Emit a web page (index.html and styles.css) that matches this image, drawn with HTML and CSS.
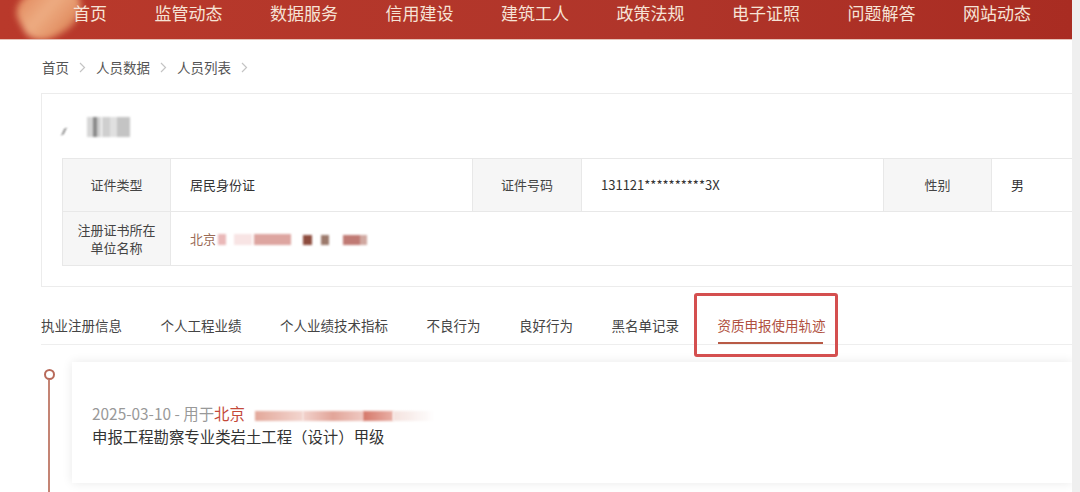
FILE: index.html
```html
<!DOCTYPE html>
<html lang="zh-CN">
<head>
  <meta charset="UTF-8" />
  <meta name="viewport" content="width=device-width, initial-scale=1.0">
  <title>人员详情</title>
  <link rel="stylesheet" href="styles.css">
</head>
<body>
  <div class="page">

    <header class="topnav">
      <div class="topnav-flag"></div>
      <nav class="topnav-links">
        <a>首页</a>
        <a>监管动态</a>
        <a>数据服务</a>
        <a>信用建设</a>
        <a>建筑工人</a>
        <a>政策法规</a>
        <a>电子证照</a>
        <a>问题解答</a>
        <a>网站动态</a>
      </nav>
    </header>

    <div class="breadcrumb">
      <span>首页</span>
      <svg class="crumb-sep" width="7" height="11" viewBox="0 0 7 11"><path d="M1 1l4.5 4.5L1 10" fill="none" stroke="#c4c4c4" stroke-width="1.2"/></svg>
      <span>人员数据</span>
      <svg class="crumb-sep" width="7" height="11" viewBox="0 0 7 11"><path d="M1 1l4.5 4.5L1 10" fill="none" stroke="#c4c4c4" stroke-width="1.2"/></svg>
      <span>人员列表</span>
      <svg class="crumb-sep" width="7" height="11" viewBox="0 0 7 11"><path d="M1 1l4.5 4.5L1 10" fill="none" stroke="#c4c4c4" stroke-width="1.2"/></svg>
    </div>

    <section class="info-card">
      <div class="person-name">
        <span class="blur blur-slash"></span>
        <span class="blur blur-n1"></span>
        <span class="blur blur-n2"></span>
      </div>

      <table class="info-table">
        <colgroup>
          <col class="c-label">
          <col class="c-value">
          <col class="c-label2">
          <col class="c-value">
          <col class="c-label">
          <col class="c-last">
        </colgroup>
        <tr class="row-first">
          <th>证件类型</th>
          <td>居民身份证</td>
          <th>证件号码</th>
          <td>131121**********3X</td>
          <th>性别</th>
          <td>男</td>
        </tr>
        <tr class="row-second">
          <th>注册证书所在<br>单位名称</th>
          <td colspan="5" class="company">
            北京<span class="blur b-a"></span><span class="blur b-b"></span><span class="blur b-c"></span><span class="blur b-d"></span><span class="blur b-e"></span><span class="blur b-f"></span>
          </td>
        </tr>
      </table>
    </section>

    <div class="tabs">
      <span class="tab">执业注册信息</span>
      <span class="tab">个人工程业绩</span>
      <span class="tab">个人业绩技术指标</span>
      <span class="tab">不良行为</span>
      <span class="tab">良好行为</span>
      <span class="tab">黑名单记录</span>
      <span class="tab active">资质申报使用轨迹</span>
    </div>

    <div class="timeline">
      <div class="rail">
        <span class="dot"></span>
        <span class="line"></span>
      </div>
      <div class="record">
        <div class="record-meta">2025-03-10 - 用于<span class="city">北京</span><span class="blur r-a"></span><span class="blur r-b"></span><span class="blur r-c"></span><span class="blur r-d"></span></div>
        <div class="record-title">申报工程勘察专业类岩土工程（设计）甲级</div>
      </div>
    </div>

  </div>
</body>
</html>
```

FILE: styles.css
```css
body {
  margin: 0;
  background: #efefef;
  font-family: "Noto Sans CJK SC", "Liberation Sans", sans-serif;
  color: #333;
}

.page {
  width: 1072px;
  height: 492px;
  overflow: hidden;
  background: #fff;
}

/* top navigation */
.topnav {
  position: relative;
  height: 40px;
  overflow: hidden;
  background: linear-gradient(90deg, #b9392b, #b0352a 60%, #a92c22);
  border-bottom: 1px solid #e6c2b8;
  box-sizing: border-box;
}

.topnav-flag {
  position: absolute;
  left: 18px;
  top: -14px;
  width: 64px;
  height: 50px;
  border-radius: 40% 60% 55% 45%;
  transform: rotate(-28deg);
  background: linear-gradient(160deg, #e48c5e 0%, #f0b287 45%, #e79a6c 75%, #cf6e48 100%);
  filter: blur(3px);
  opacity: 0.95;
}

.topnav-links {
  position: relative;
  display: flex;
  gap: 47.5px;
  padding-left: 73px;
  height: 39px;
  align-items: flex-start;
}

.topnav-links a {
  font-size: 17px;
  color: #f6e3d6;
  line-height: 24px;
  margin-top: 1px;
}

/* breadcrumb */
.breadcrumb {
  display: flex;
  align-items: center;
  gap: 8px;
  margin: 17px 0 0 42px;
  font-size: 13.5px;
  line-height: 20px;
  color: #555;
}

.crumb-sep {
  margin: 0 2px;
}

/* person info */
.info-card {
  margin: 16px 0 0 41px;
  height: 194px;
  box-sizing: border-box;
  border: 1px solid #ececec;
  border-right: none;
  padding: 0 0 0 20px;
}

.person-name {
  display: flex;
  align-items: center;
  height: 20px;
  margin-top: 23px;
}

.blur {
  display: inline-block;
  filter: blur(1.2px);
  vertical-align: middle;
}

.blur-slash {
  width: 2px;
  height: 7px;
  margin: 9px 22px 0 1px;
  background: #888;
  transform: skewX(-25deg);
}

.blur-n1 {
  width: 14px;
  height: 20px;
  background: linear-gradient(90deg, #d6d6d6 0 45%, #8a8a8a 45% 75%, #d0d0d0 75%);
}

.blur-n2 {
  width: 28px;
  height: 20px;
  margin-left: 1px;
  background: linear-gradient(90deg, #cfcfcf 0 30%, #e0e0e0 30% 55%, #c4c4c4 55%);
}

.info-table {
  margin-top: 21px;
  width: 1011px;
  border-collapse: collapse;
  table-layout: fixed;
  font-size: 13px;
}

.c-label { width: 108px; }
.c-label2 { width: 109px; }
.c-value { width: 302px; }
.c-last { width: 82px; }

.info-table th,
.info-table td {
  border: 1px solid #e8e8e8;
  padding: 0;
  font-weight: normal;
  line-height: 18px;
}

.row-first th,
.row-first td {
  height: 52px;
}

.row-second th,
.row-second td {
  height: 53px;
}

.info-table th {
  background: #f6f6f6;
  color: #444;
  text-align: center;
}

.info-table td {
  padding-left: 19px;
  color: #333;
}

.info-table td:last-child {
  border-right: none;
}

.info-table td.company {
  color: #9a6a55;
}

.b-a { width: 8px; height: 11px; margin-left: 2px; background: #eab8b8; }
.b-b { width: 18px; height: 11px; margin-left: 8px; background: #f8e4e4; }
.b-c { width: 37px; height: 11px; margin-left: 2px; background: #dda5a0; }
.b-d { width: 9px; height: 10px; margin-left: 12px; background: #8e4c3e; }
.b-e { width: 8px; height: 10px; margin-left: 9px; background: #9c7a6c; }
.b-f { width: 24px; height: 10px; margin-left: 14px; background: linear-gradient(90deg, #c07a74 70%, #d0a8a0 70%); }

/* tabs */
.tabs {
  display: flex;
  gap: 38.5px;
  margin: 13px 0 0 41px;
  border-bottom: 1px solid #eee;
}

.tab {
  position: relative;
  font-size: 13.5px;
  line-height: 20px;
  padding: 15px 0 9px;
  color: #444;
}

.tab.active {
  color: #b0503e;
}

.tab.active::before {
  content: "";
  position: absolute;
  left: 0;
  right: 3px;
  bottom: 0;
  height: 2px;
  background: #b85a46;
}

/* annotation box drawn over the active tab */
.tab.active::after {
  content: "";
  position: absolute;
  left: -24px;
  top: -7px;
  width: 138px;
  height: 58px;
  border: 3px solid #d44f4f;
  border-radius: 3px;
}

/* timeline */
.timeline {
  display: flex;
  margin: 17px 0 0 41px;
  height: 200px;
}

.rail {
  display: flex;
  flex-direction: column;
  align-items: center;
  width: 16px;
}

.dot {
  width: 11px;
  height: 11px;
  box-sizing: border-box;
  margin-top: 7px;
  border: 2px solid #b86a5a;
  border-radius: 50%;
}

.line {
  flex: 1;
  width: 2px;
  background: #c48474;
}

.record {
  margin-left: 15px;
  flex: 1;
  height: 121px;
  box-sizing: border-box;
  padding: 40px 0 0 20px;
  background: #fff;
  box-shadow: 0 0 10px rgba(0, 0, 0, 0.09);
  font-size: 15.4px;
  line-height: 23px;
}

.record-meta {
  color: #999;
}

.city {
  color: #c4493a;
}

.r-a { width: 48px; height: 10px; margin-left: 10px; background: linear-gradient(90deg, #e3a89a, #f3d6d0); }
.r-b { width: 60px; height: 10px; background: linear-gradient(90deg, #f2d2cc, #e2a599, #efc9c2); }
.r-c { width: 30px; height: 10px; background: linear-gradient(90deg, #d5786a, #e9b0a6); }
.r-d { width: 42px; height: 10px; background: linear-gradient(90deg, #f4e2de, rgba(255, 255, 255, 0)); }

.record-title {
  color: #333;
}
```
